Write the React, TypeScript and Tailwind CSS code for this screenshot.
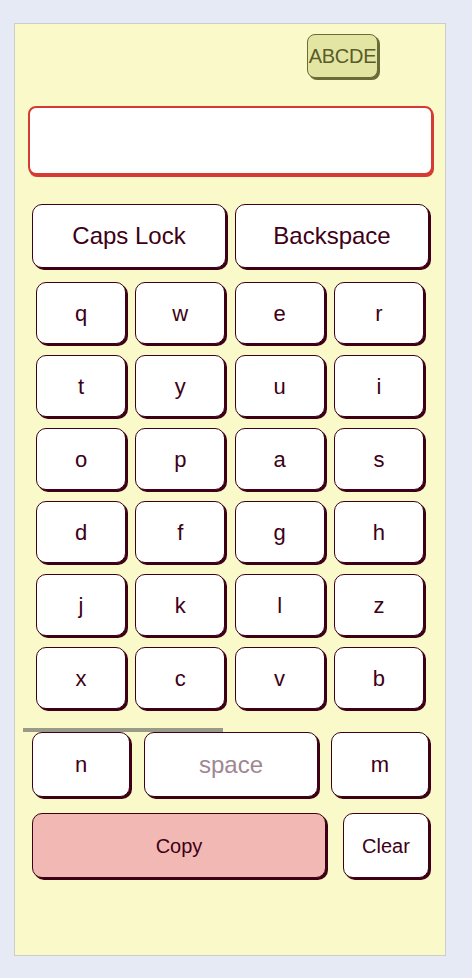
import React from "react";

const rows = [
  ["q", "w", "e", "r"],
  ["t", "y", "u", "i"],
  ["o", "p", "a", "s"],
  ["d", "f", "g", "h"],
  ["j", "k", "l", "z"],
  ["x", "c", "v", "b"],
];

const keyCls =
  "flex items-center justify-center bg-white border-[1.5px] border-[#3d0016] rounded-[10px] shadow-[2px_2px_0_#3d0016] text-[#3d0016]";

export default function App() {
  return (
    <div
      className="min-h-screen w-full bg-[#e6eaf4] pt-[23px]"
      style={{ fontFamily: '"Liberation Sans", Arial, sans-serif' }}
    >
      <div className="ml-[14px] w-[432px] h-[933px] bg-[#f9f9c9] border border-[#cccccc] flex flex-col">
        <div className="flex mt-[10px] ml-[292px]">
          <button className="w-[71px] h-[44px] rounded-[8px] border-[1.5px] border-[#6b6b38] bg-[#e3e5a3] shadow-[2px_2px_0_#6b6b38] text-[20px] text-[#5a5a2a] flex items-center justify-center overflow-visible whitespace-nowrap tracking-[-0.3px]">
            ABCDE
          </button>
        </div>
        <div className="mt-[28px] ml-[13px] w-[405px] h-[69px] bg-white border-2 border-[#d63a34] rounded-[8px] shadow-[1px_2px_0_#d63a34]" />
        <div className="flex mt-[29px] ml-[17px] gap-[9px]">
          <button className={`${keyCls} w-[194px] h-[64px] text-[24px]`}>Caps Lock</button>
          <button className={`${keyCls} w-[194px] h-[64px] text-[24px]`}>Backspace</button>
        </div>
        <div className="flex flex-col mt-[14px] ml-[21px] gap-[11px]">
          {rows.map((r, i) => (
            <div key={i} className="flex gap-[9.3px]">
              {r.map((k) => (
                <button key={k} className={`${keyCls} w-[90px] h-[62px] text-[22px]`}>
                  {k}
                </button>
              ))}
            </div>
          ))}
        </div>
        <div className="mt-[19px] ml-[8px] w-[200px] h-[4px] bg-[#9a9a88]" />
        <div className="flex ml-[17px]">
          <button className={`${keyCls} w-[98px] h-[65px] text-[22px]`}>n</button>
          <button className={`${keyCls} ml-[14px] w-[174px] h-[65px] text-[24px] !text-[#a08690]`}>space</button>
          <button className={`${keyCls} ml-[13px] w-[98px] h-[65px] text-[22px]`}>m</button>
        </div>
        <div className="flex mt-[16px] ml-[17px]">
          <button className={`${keyCls} !bg-[#f2b8b4] w-[294px] h-[65px] text-[20px]`}>Copy</button>
          <button className={`${keyCls} ml-[17px] w-[86px] h-[65px] text-[20px]`}>Clear</button>
        </div>
      </div>
    </div>
  );
}
